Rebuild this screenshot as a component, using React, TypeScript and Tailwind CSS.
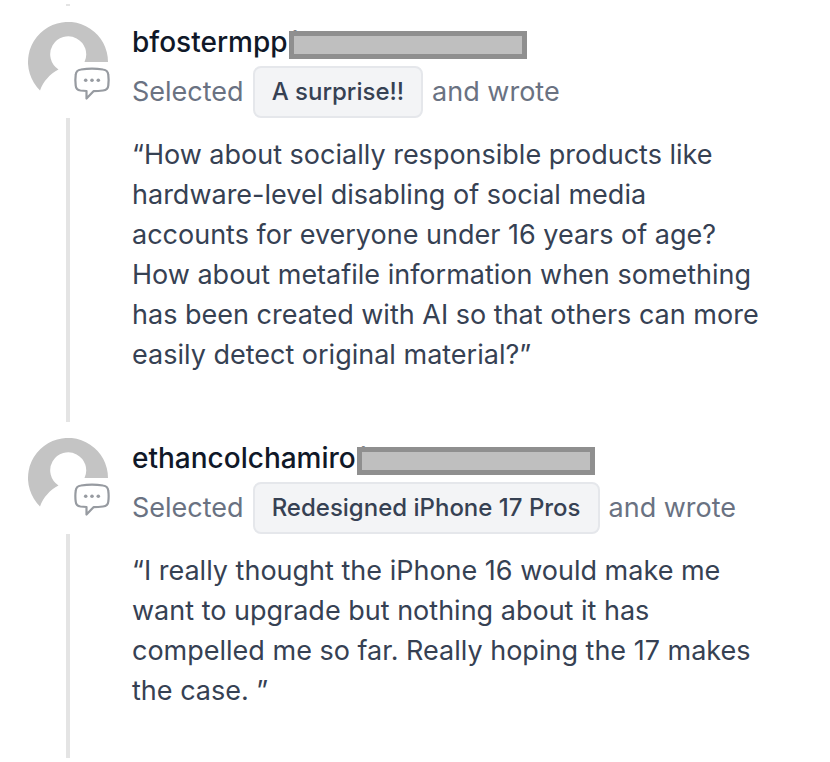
import React from "react";

type Response = {
  name: string;
  choice: string;
  quote: string;
};

const responses: Response[] = [
  {
    name: "bfostermpp(",
    choice: "A surprise!!",
    quote:
      "“How about socially responsible products like hardware-level disabling of social media accounts for everyone under 16 years of age? How about metafile information when something has been created with AI so that others can more easily detect original material?”",
  },
  {
    name: "ethancolchamiro(",
    choice: "Redesigned iPhone 17 Pros",
    quote:
      "“I really thought the iPhone 16 would make me want to upgrade but nothing about it has compelled me so far. Really hoping the 17 makes the case. ”",
  },
];

function Avatar() {
  return (
    <svg viewBox="0 0 84 80" className="h-20 w-[84px] shrink-0" aria-hidden="true">
      <path
        d="M12 68.5A40 40 0 1 1 80 40H56.5A18 18 0 1 0 30.5 47.5C22 52 15.5 59 12 68.5Z"
        fill="#c4c4c4"
      />
      <path
        d="M53 47.5Q64 45.8 75 47.5Q80 48 80.3 53Q81 58 80.3 63.5Q80 68 75 68.5Q70 69.2 65.5 69.2L58.5 76.5V69L52.5 68.5Q48 68 47.7 63.5Q47 58 47.7 53Q48 48 53 47.5Z"
        fill="white"
        stroke="#979ba1"
        strokeWidth="2.2"
        strokeLinejoin="round"
      />
      <g fill="#979ba1">
        <circle cx="57.7" cy="58.3" r="1.8" />
        <circle cx="64" cy="58.3" r="1.8" />
        <circle cx="70.3" cy="58.3" r="1.8" />
      </g>
    </svg>
  );
}

function Item({ item }: { item: Response }) {
  return (
    <article className="flex gap-5 pr-16 pl-7">
      <div className="flex shrink-0 flex-col">
        <Avatar />
        <div className="mt-4 ml-[38px] w-1 flex-1 bg-[#e4e4e4]" />
      </div>
      <div className="min-w-0 flex-1 pb-[47px]">
        <h2 className="mb-1 flex h-10 items-center text-[28px] font-medium text-gray-900">
          {item.name}
          <span className="mt-1.5 -ml-[9px] h-7 w-[238px] border-[5px] border-[#8f8f8f] bg-[#bfbfbf]" />
        </h2>
        <p className="flex items-center gap-[9px] text-[27px] text-gray-500">
          Selected
          <span className="flex h-13 items-center rounded-lg border-2 border-gray-200 bg-gray-100 px-[17px] text-2xl font-medium text-gray-700">
            {item.choice}
          </span>
          and wrote
        </p>
        <blockquote className="mt-[17px] text-[27px] leading-10 text-gray-700">{item.quote}</blockquote>
      </div>
    </article>
  );
}

export default function App() {
  return (
    <main className="bg-white pt-1 pb-1 font-['Inter',sans-serif]">
      <div className="mb-4 ml-[66px] h-0.5 w-1 bg-[#e4e4e4]" />
      <div className="flex flex-col gap-4">
        {responses.map((item) => (
          <Item key={item.name} item={item} />
        ))}
      </div>
    </main>
  );
}
